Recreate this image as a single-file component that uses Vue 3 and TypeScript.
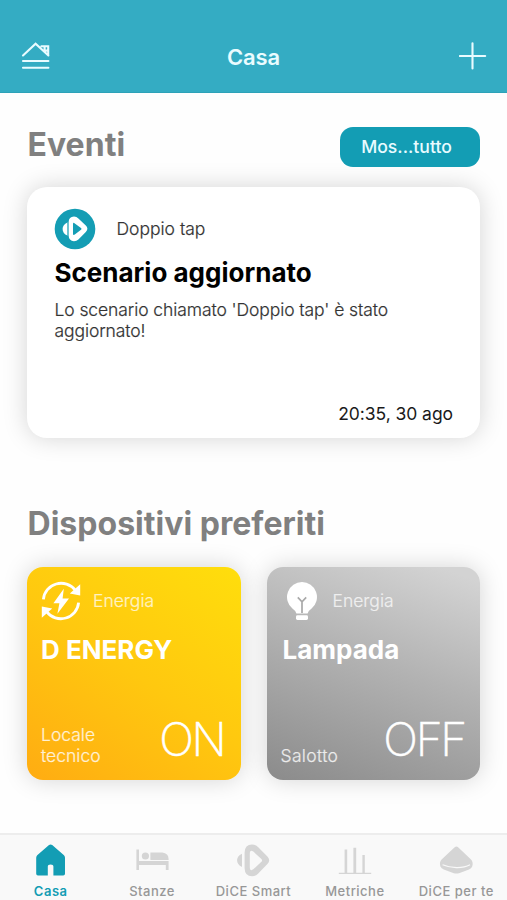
<script setup lang="ts">
interface Device {
  id: string
  kind: string
  name: string
  room: string
  state: string
}

interface Tab {
  id: string
  label: string
}

const devices: Device[] = [
  { id: 'energy', kind: 'Energia', name: 'D ENERGY', room: 'Locale tecnico', state: 'ON' },
  { id: 'lamp', kind: 'Energia', name: 'Lampada', room: 'Salotto', state: 'OFF' },
]

const tabs: Tab[] = [
  { id: 'casa', label: 'Casa' },
  { id: 'stanze', label: 'Stanze' },
  { id: 'smart', label: 'DiCE Smart' },
  { id: 'metriche', label: 'Metriche' },
  { id: 'perte', label: 'DiCE per te' },
]
</script>

<template>
  <div class="screen">
    <header class="topbar">
      <svg class="home-menu" viewBox="0 0 30 30" width="30" height="30">
        <path d="M3 14.5 15.6 2.7 28.4 14.5M21.4 5.3H28.2V14M24.6 6V9.6H27" />
        <path d="M3 20H28.4M3 26.8H28.4" />
      </svg>
      <h1>Casa</h1>
      <svg class="plus" viewBox="0 0 28 28" width="28" height="28">
        <path d="M13.5 1.2V26.4M.8 14H26.2" />
      </svg>
    </header>

    <main class="content">
      <div class="section-head">
        <h2>Eventi</h2>
        <button class="show-all">Mos...tutto</button>
      </div>

      <article class="event">
        <div class="event-source">
          <svg viewBox="0 0 42 42" width="42" height="42">
            <circle cx="21" cy="21" r="20.3" fill="#149db4" />
            <path d="M14.6 14.2Q14.8 8.7 20 8.6Q22.6 8.6 24.4 10.4L31.8 17.6Q35 20.8 31.8 24L24.4 31.4Q22.6 33.2 20 33.2Q14.8 33 14.6 27.6Z" fill="#fff" />
            <path d="M19 16.2Q19 14 20.8 15.4L27 20Q28.2 20.9 27 21.8L20.8 26.6Q19 27.9 19 25.7Z" fill="#149db4" />
            <path d="M13.4 14.4V27.6C7 25.2 7 16.8 13.4 14.4Z" fill="#fff" />
            <path d="M14 14.2V27.8" stroke="#6dc2cf" stroke-width="1" />
          </svg>
          <span>Doppio tap</span>
        </div>
        <h3>Scenario aggiornato</h3>
        <p>Lo scenario chiamato 'Doppio tap' è stato aggiornato!</p>
        <time>20:35, 30 ago</time>
      </article>

      <h2 class="favorites">Dispositivi preferiti</h2>

      <div class="devices">
        <article v-for="d in devices" :key="d.id" class="device" :class="d.id">
          <div class="device-kind">
            <svg v-if="d.id === 'energy'" viewBox="0 0 40 40" width="40" height="40">
              <g fill="none" stroke="#fff" stroke-width="2.8">
                <path d="M2.4 18.4A17.8 17.8 0 0 1 34.2 9.2" />
                <path d="M37.6 21.6A17.8 17.8 0 0 1 5.8 30.8" />
              </g>
              <path d="M39.2 3.2V14.6L28.8 12.4ZM.8 36.8V25.4L11.2 27.6Z" fill="#fff" />
              <path d="M22.8 7.8 12.4 22.2H18.4L16.4 32.8 28 17.4H21.6Z" fill="#fff" />
            </svg>
            <svg v-else viewBox="0 0 32 40" width="32" height="40">
              <path d="M16 1A15 15 0 0 0 6.4 27.5Q9.6 29.6 10.4 32.6H21.6Q22.4 29.6 25.6 27.5A15 15 0 0 0 16 1Z" fill="#fff" />
              <rect x="10" y="34.2" width="12" height="4.8" rx="1.4" fill="#fff" />
              <path d="M16 32V20.6M11.8 16.4 16 20.8 20.2 16.4" fill="none" stroke="#a9a9a9" stroke-width="1.7" />
            </svg>
            <span>{{ d.kind }}</span>
          </div>
          <h3>{{ d.name }}</h3>
          <div class="device-foot">
            <span class="room">{{ d.room }}</span>
            <span class="state">{{ d.state }}</span>
          </div>
        </article>
      </div>
    </main>

    <nav class="tabs">
      <a v-for="(t, i) in tabs" :key="t.id" class="tab" :class="{ active: i === 0 }">
        <svg viewBox="0 0 36 34" width="36" height="34">
          <path v-if="t.id === 'casa'" d="M17.6 1.4Q18.4 1.4 19.2 2.1L31 12.2Q32 13.2 32 14.8V30.8Q32 32.6 30.2 32.6H20.4V23.6Q20.4 21.4 17.6 21.4T14.8 23.6V32.6H5Q3.2 32.6 3.2 30.8V14.8Q3.2 13.2 4.2 12.2L16 2.1Q16.8 1.4 17.6 1.4Z" />
          <g v-else-if="t.id === 'stanze'">
            <path d="M2.4 6.4H5V18H34.6V27H31.8V22H5V27H2.4Z" />
            <circle cx="11.4" cy="13" r="3.6" />
            <path d="M16.4 9.6H28.4Q34.4 10.2 34.6 16V17H16.4Z" />
          </g>
          <g v-else-if="t.id === 'smart'">
            <path fill-rule="evenodd" d="M9.6 9.6Q9.8 1.6 17 1.6Q20.6 1.6 23 4L32.4 13.4Q36 17.2 32.4 21L23 30.8Q20.6 33.2 17 33.2Q9.8 33.2 9.6 25.2ZM14.8 11V24Q14.8 29 18.6 26L26.4 18.8Q27.8 17.4 26.4 16L18.6 8.8Q14.8 6 14.8 11Z" />
            <path d="M7 10.8V24C.4 21.2.4 13.6 7 10.8Z" />
          </g>
          <path v-else-if="t.id === 'metriche'" d="M1.8 29.8H34.2V31H1.8ZM7.6 6.6H10.2V29.8H7.6ZM16.4 4.8H19.2V29.8H16.4ZM25.4 12H27.8V29.8H25.4Z" />
          <g v-else>
            <path d="M16.7 4.2Q18.4 2.8 20.1 4.2L33 16.6Q35.6 19.6 34.2 23.6Q33.4 25.6 31 26.4L21 30.2Q18.4 31 15.8 30.2L5.8 26.4Q3.4 25.6 2.4 23.6Q1 19.6 3.6 16.6Z" />
            <path d="M4.6 21.8Q10.4 24.4 18.4 24.6T32 21.8" fill="none" stroke="#f9f9f9" stroke-width="1.1" />
          </g>
        </svg>
        <span>{{ t.label }}</span>
      </a>
    </nav>
  </div>
</template>

<style>
body {
  margin: 0;
  background: #fff;
}
</style>

<style scoped>
.screen {
  width: 507px;
  height: 900px;
  display: flex;
  flex-direction: column;
  overflow: hidden;
  background: #fefefe;
  font-family: Inter, 'Liberation Sans', sans-serif;
  color: #000;
}

h1,
h2,
h3,
p {
  margin: 0;
}

.topbar {
  flex: none;
  box-sizing: border-box;
  height: 93px;
  padding: 19px 20px 0;
  display: flex;
  align-items: center;
  justify-content: space-between;
  background: #34acc3;
  border-bottom: 1px solid #2da2b8;
}

.topbar svg {
  fill: none;
  stroke: #e9fbff;
  stroke-width: 2.1;
  stroke-linecap: round;
}

.topbar h1 {
  font-size: 22px;
  line-height: 26px;
  font-weight: 600;
  letter-spacing: -0.15px;
  padding: 2px 2px 0 0;
  color: #eafcff;
}

.content {
  flex: 1;
  padding: 34px 27px 0;
}

.section-head {
  display: flex;
  justify-content: space-between;
  height: 60px;
}

h2 {
  padding-left: 0.5px;
  font-size: 32px;
  line-height: 35px;
  font-weight: 700;
  letter-spacing: 0.03px;
  color: #808080;
}

.show-all {
  width: 140px;
  height: 40px;
  padding: 0 7px 1px 0;
  border: 0;
  border-radius: 13px;
  background: #139db4;
  color: #e8fbff;
  font: 500 17.6px Inter, sans-serif;
}

.event {
  box-sizing: border-box;
  height: 251px;
  padding: 21px 27px 12px 27.5px;
  display: flex;
  flex-direction: column;
  border-radius: 20px;
  background: #fff;
  box-shadow: 0 0 24px rgba(0, 0, 0, 0.17);
}

.event-source {
  display: flex;
  align-items: center;
  gap: 20.5px;
  height: 42px;
  font-size: 17.5px;
  font-weight: 300;
  color: #333;
}

.event-source svg {
  margin-left: -0.5px;
}

.event-source span {
  padding-bottom: 1px;
}

.event h3 {
  margin-top: 6px;
  font-size: 26px;
  line-height: 34px;
  font-weight: 700;
}

.event p {
  margin-top: 9px;
  font-size: 17.5px;
  line-height: 21px;
  font-weight: 300;
  letter-spacing: -0.09px;
  color: #333;
}

.event-source span,
.event p,
.device-kind span,
.room {
  -webkit-text-stroke: 0.2px currentColor;
}

.event time {
  margin-top: auto;
  align-self: flex-end;
  font-size: 17.5px;
  line-height: 24px;
  letter-spacing: -0.06px;
  color: #1a1a1a;
}

.favorites {
  margin-top: 68px;
}

.devices {
  display: flex;
  gap: 26px;
  margin-top: 26px;
}

.device {
  box-sizing: border-box;
  flex: 1;
  height: 213px;
  padding: 14px 15px 14px 14px;
  display: flex;
  flex-direction: column;
  border-radius: 16px;
  color: #fff;
  box-shadow: 0 0 24px rgba(0, 0, 0, 0.17);
}

.energy {
  background: linear-gradient(215deg, #ffde0c 0%, #ffc80f 50%, #ffac12 100%);
}

.lamp {
  background: linear-gradient(200deg, #d3d3d3 5%, #b3b3b3 45%, #8b8b8b 100%);
}

.device-kind {
  display: flex;
  align-items: center;
  gap: 12px;
  height: 40px;
  font-size: 17.5px;
  font-weight: 300;
}

.device-kind span {
  padding-bottom: 2px;
  opacity: 0.75;
}

.device h3 {
  margin-top: 12px;
  font-size: 26px;
  line-height: 34px;
  font-weight: 700;
}

.device-foot {
  margin-top: auto;
  display: flex;
  justify-content: space-between;
  align-items: flex-end;
}

.room {
  width: 80px;
  font-size: 17.5px;
  line-height: 21px;
  font-weight: 300;
  opacity: 0.82;
}

.state {
  font-size: 46px;
  line-height: 54px;
  font-weight: 200;
  letter-spacing: -2.3px;
  -webkit-text-stroke: 0.5px currentColor;
}

.energy .state {
  padding-right: 1px;
}

.lamp .device-kind {
  padding-left: 5px;
  gap: 15px;
}

.lamp h3 {
  padding-left: 2px;
}

.lamp .room {
  letter-spacing: 0.35px;
}

.tabs {
  flex: none;
  box-sizing: border-box;
  height: 67px;
  padding-top: 8px;
  display: grid;
  grid-template-columns: repeat(5, 1fr);
  border-top: 2px solid #ededed;
  background: #f9f9f9;
}

.tab {
  display: flex;
  flex-direction: column;
  align-items: center;
  gap: 7px;
  font-size: 13px;
  line-height: 15px;
  font-weight: 500;
  letter-spacing: 0.5px;
  color: #979797;
  white-space: nowrap;
}

.tab svg {
  fill: #d5d5d5;
}

.tab.active {
  color: #139db4;
  font-weight: 600;
}

.tab.active svg {
  fill: #139db4;
}
</style>
